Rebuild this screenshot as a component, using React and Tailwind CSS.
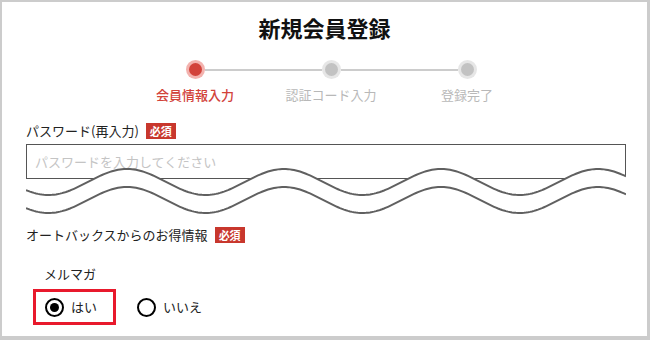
import React from "react";

const FONT = { fontFamily: '"Noto Sans CJK JP", "Noto Sans", sans-serif' };

function wavePoints(center, width) {
  const pts = [];
  for (let x = 0; x <= width; x += 2) {
    const y = center - 13 * Math.cos((2 * Math.PI * (x - 101)) / 157);
    pts.push([x, y]);
  }
  return pts;
}

function Waves() {
  const w = 600;
  const top = wavePoints(17, w);
  const bottom = wavePoints(35, w);
  const line = (pts) => pts.map(([x, y]) => `${x},${y.toFixed(2)}`).join(" ");
  const fill = line(top) + " " + line([...bottom].reverse());
  return (
    <svg width={w} height={56} viewBox={`0 0 ${w} 56`} className="block">
      <polygon points={fill} fill="#ffffff" />
      <polyline points={line(top)} fill="none" stroke="#606060" strokeWidth="2" />
      <polyline points={line(bottom)} fill="none" stroke="#606060" strokeWidth="2" />
    </svg>
  );
}

function Badge() {
  return (
    <span className="ml-[7px] inline-flex h-[16px] items-center bg-[#c8372d] px-[4px] text-[11px] font-bold leading-none text-white">
      必須
    </span>
  );
}

function StepDot({ active }) {
  return (
    <span
      className={`flex h-[19px] w-[19px] items-center justify-center rounded-full ${
        active ? "bg-[#f3b2ae]" : "bg-[#e6e6e6]"
      }`}
    >
      <span
        className={`h-[13px] w-[13px] rounded-full ${active ? "bg-[#d2423a]" : "bg-[#c2c2c2]"}`}
      />
    </span>
  );
}

function Radio({ checked, label }) {
  return (
    <label className="flex items-center gap-[7px]">
      <span className="flex h-[19px] w-[19px] items-center justify-center rounded-full border-2 border-black bg-white">
        {checked && <span className="h-[9px] w-[9px] rounded-full bg-black" />}
      </span>
      <span className="text-[13px] text-[#222]">{label}</span>
    </label>
  );
}

export default function App() {
  const steps = [
    { label: "会員情報入力", active: true },
    { label: "認証コード入力", active: false },
    { label: "登録完了", active: false },
  ];

  return (
    <div
      className="h-[340px] w-[650px] overflow-hidden border-t-2 border-l-2 border-r-[3px] border-b-[4px] border-[#cccccc] bg-white text-[#222]"
      style={FONT}
    >
      <h1 className="pt-[11px] text-center text-[22px] font-bold leading-[28px] text-[#111]">
        新規会員登録
      </h1>

      <div className="ml-[184px] mt-[19px] flex items-center">
        <StepDot active />
        <span className="h-[2px] w-[117px] bg-[#cccccc]" />
        <StepDot />
        <span className="h-[2px] w-[117px] bg-[#cccccc]" />
        <StepDot />
      </div>

      <div className="ml-[125px] mt-[7px] flex">
        {steps.map((s) => (
          <span
            key={s.label}
            className={`w-[136px] text-center text-[13px] leading-[18px] ${
              s.active ? "font-medium text-[#d2423a]" : "text-[#b8b8b8]"
            }`}
          >
            {s.label}
          </span>
        ))}
      </div>

      <div className="px-[24px]">
        <div className="mt-[18px] flex h-[18px] items-center">
          <span className="text-[13px] leading-[18px]">パスワード(再入力)</span>
          <Badge />
        </div>

        <div className="relative mt-[4px] h-[79px] w-[600px]">
          <div className="flex h-[35px] items-center border border-[#555555] px-[8px] text-[13px] text-[#c4c4c4]">
            パスワードを入力してください
          </div>
          <div className="absolute left-0 top-[21px]">
            <Waves />
          </div>
        </div>

        <div className="mt-[3px] flex h-[18px] items-center">
          <span className="text-[13px] leading-[18px]">オートバックスからのお得情報</span>
          <Badge />
        </div>

        <div className="ml-[18px] mt-[21px] text-[13px] leading-[18px]">メルマガ</div>

        <div className="mt-[6px] flex items-center">
          <div className="ml-[7px] flex h-[36px] w-[83px] items-center border-[3px] border-[#e8192c] pl-[9px]">
            <Radio checked label="はい" />
          </div>
          <div className="ml-[21px]">
            <Radio label="いいえ" />
          </div>
        </div>
      </div>
    </div>
  );
}
